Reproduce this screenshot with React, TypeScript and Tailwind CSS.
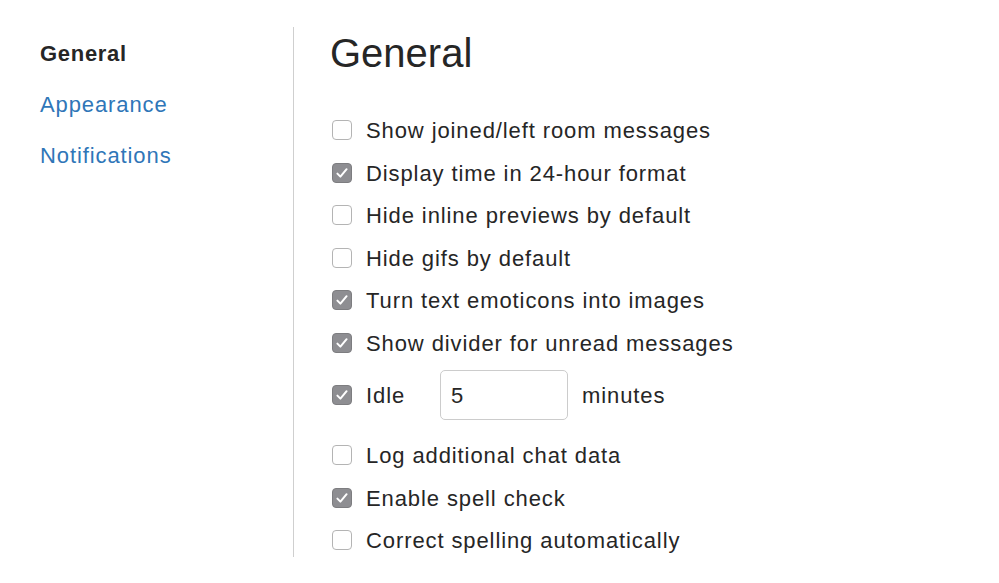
import React from "react";

const font = { fontFamily: '"Liberation Sans", Arial, sans-serif' };

function Box({ checked }: { checked: boolean }) {
  return checked ? (
    <span className="flex h-[20px] w-[20px] shrink-0 items-center justify-center rounded-[4px] border border-[#7d7d80] bg-[#8e8e92]">
      <svg width="16" height="16" viewBox="0 0 16 16" fill="none">
        <path d="M3.4 8.6 L6.4 11.6 L12.6 4.2" stroke="#fff" strokeWidth="2" strokeLinecap="round" strokeLinejoin="round" />
      </svg>
    </span>
  ) : (
    <span className="block h-[20px] w-[20px] shrink-0 rounded-[4px] border border-[#b4b4b4] bg-white" />
  );
}

function Row({ checked, label }: { checked: boolean; label: string }) {
  return (
    <div className="flex h-[42.6px] items-center">
      <div className="ml-[2px]">
        <Box checked={checked} />
      </div>
      <span className="ml-[14px] pt-[1px] text-[22px] tracking-[0.9px] text-[#262626]">{label}</span>
    </div>
  );
}

export default function App() {
  return (
    <div className="flex h-[583px] w-[999px] bg-white" style={font}>
      <div className="w-[294px] shrink-0 pt-[27px] pb-[26px]">
        <div className="flex h-full border-r border-[#cfcfcf]">
          <div className="flex flex-col pl-[40px] pt-[1px] text-[22px] tracking-[0.9px]">
            <div className="flex h-[51px] items-center font-bold tracking-[0.7px] text-[#262626]">General</div>
            <div className="flex h-[51px] items-center text-[#2f76b8]">Appearance</div>
            <div className="flex h-[51px] items-center text-[#2f76b8]">Notifications</div>
          </div>
        </div>
      </div>
      <div className="flex flex-col pl-[36px] pt-[31px]">
        <h1 className="h-[44px] text-[40px] leading-[44px] text-[#262626]">General</h1>
        <div className="mt-[33.7px] flex flex-col">
          <Row checked={false} label="Show joined/left room messages" />
          <Row checked={true} label="Display time in 24-hour format" />
          <Row checked={false} label="Hide inline previews by default" />
          <Row checked={false} label="Hide gifs by default" />
          <Row checked={true} label="Turn text emoticons into images" />
          <Row checked={true} label="Show divider for unread messages" />
          <div className="flex items-center pt-[5.7px] pb-[13.7px]">
            <div className="ml-[2px]">
              <Box checked={true} />
            </div>
            <span className="ml-[14px] w-[74px] pt-[1px] text-[22px] tracking-[0.9px] text-[#262626]">Idle</span>
            <div className="flex h-[50px] w-[128px] items-center rounded-[5px] border border-[#cccccc] pl-[10px] pt-[1px] text-[22px] text-[#262626]">
              5
            </div>
            <span className="ml-[14px] pt-[1px] text-[22px] tracking-[0.9px] text-[#262626]">minutes</span>
          </div>
          <Row checked={false} label="Log additional chat data" />
          <Row checked={true} label="Enable spell check" />
          <Row checked={false} label="Correct spelling automatically" />
        </div>
      </div>
    </div>
  );
}
